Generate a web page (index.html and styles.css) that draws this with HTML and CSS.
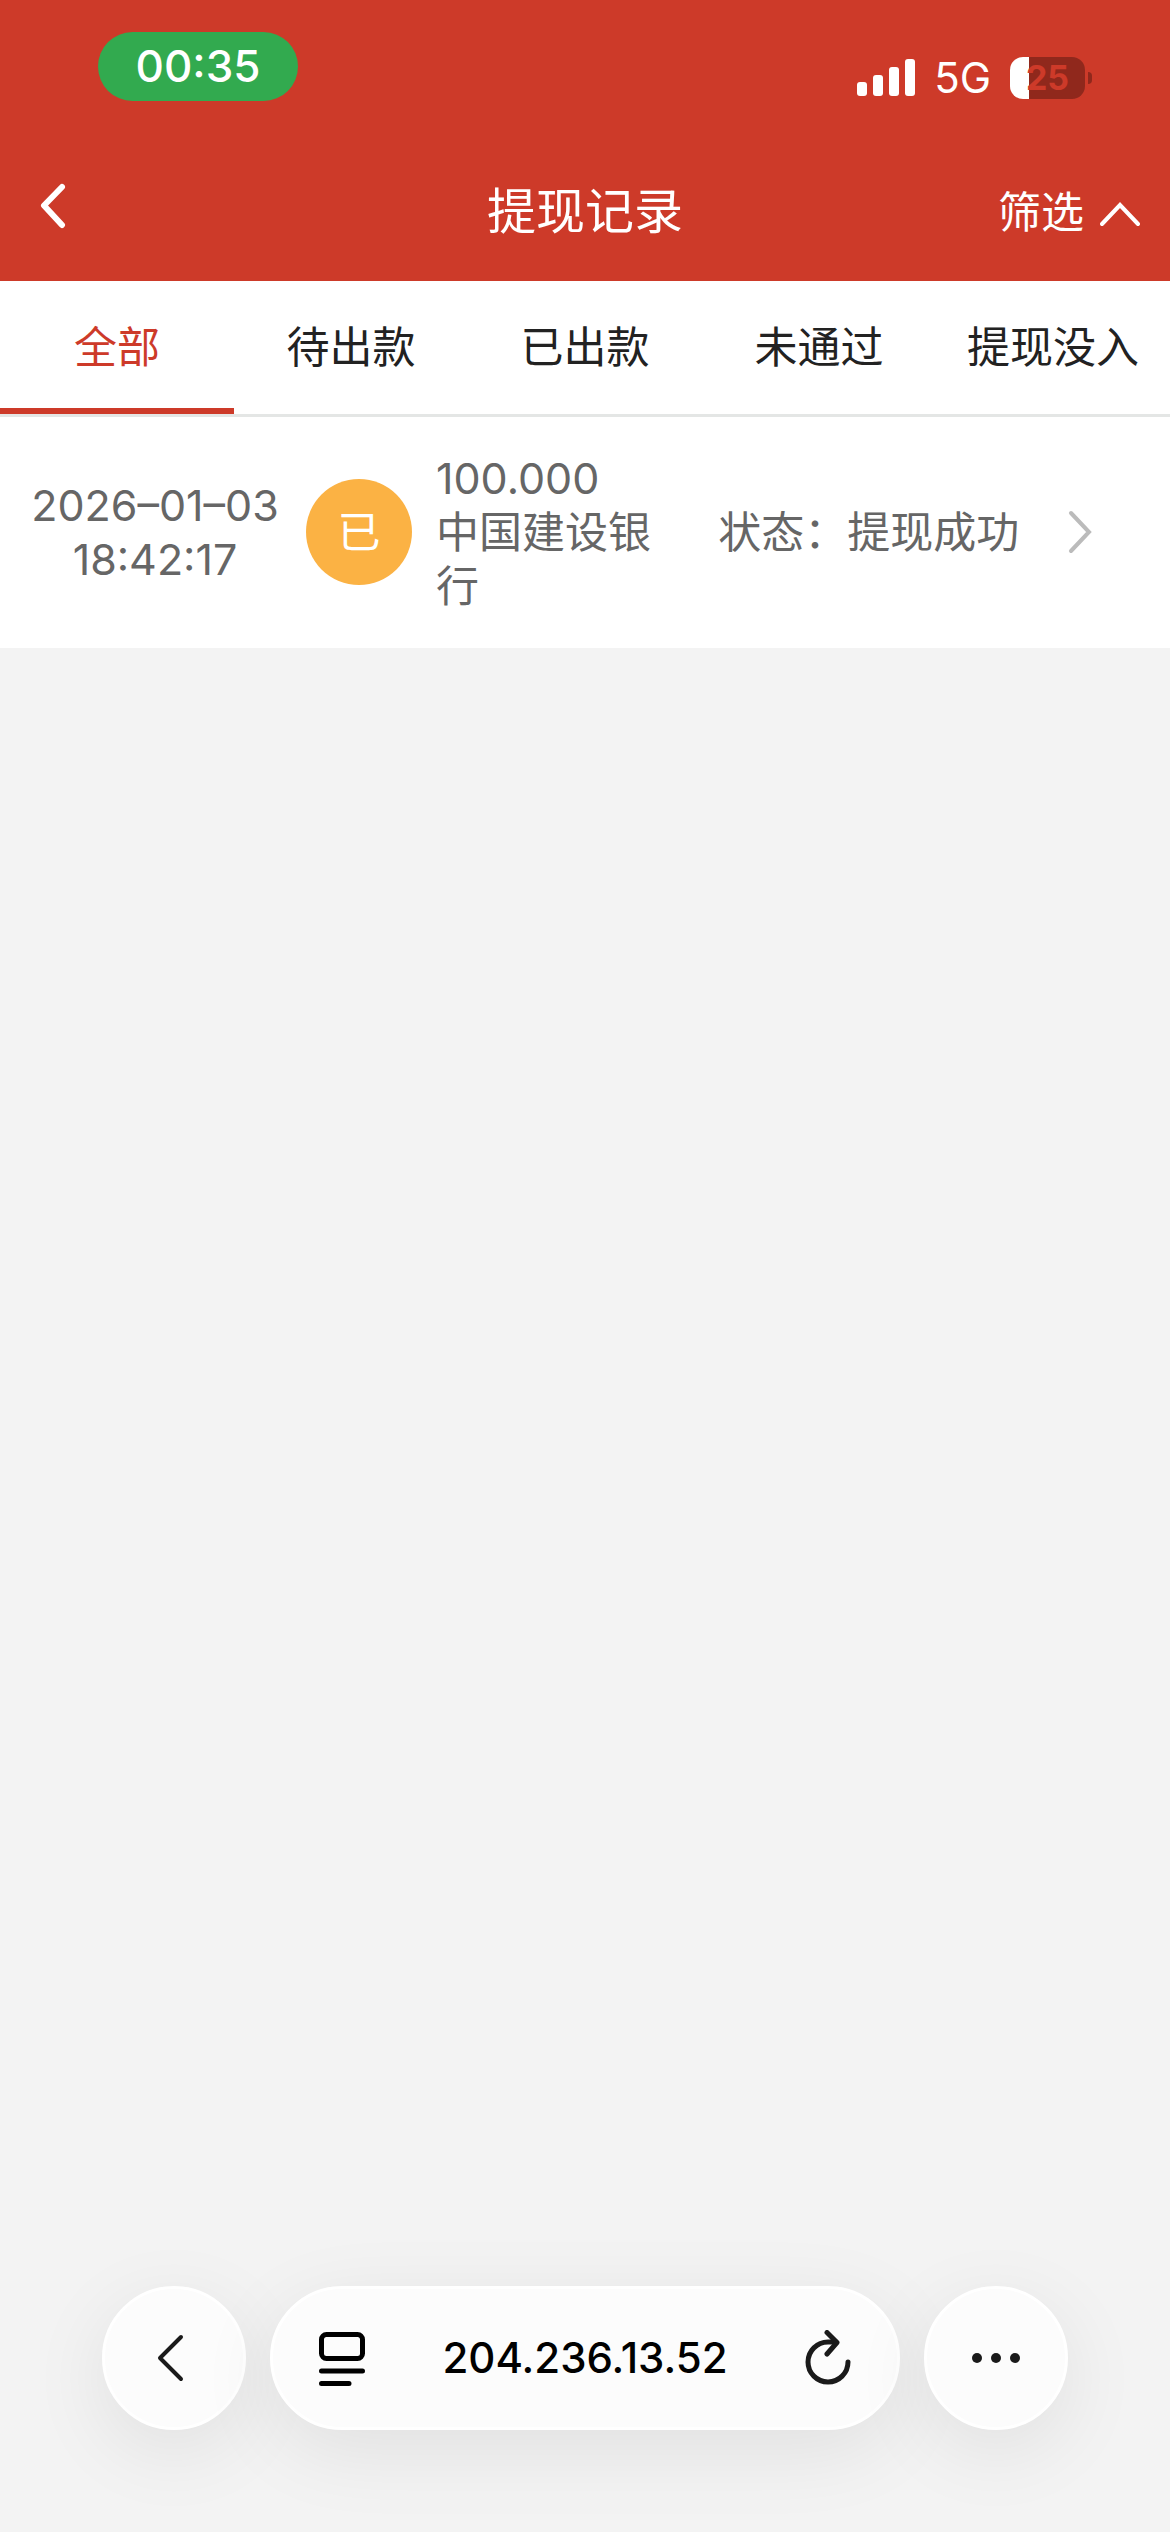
FILE: index.html
```html
<!DOCTYPE html>
<html lang="zh-CN">
<head>
  <title>提现记录</title>
  <meta charset="UTF-8">
  <meta name="viewport" content="width=device-width, initial-scale=1.0">
  <link rel="stylesheet" href="styles.css">
</head>
<body>
  <header class="top">
    <div class="status-bar">
      <span class="clock">00:35</span>
      <div class="status-right">
        <svg class="signal" width="58" height="38" viewBox="0 0 58 38" fill="#fff" aria-hidden="true">
          <rect x="0" y="23" width="10" height="14" rx="3"/>
          <rect x="16" y="16" width="10" height="21" rx="3"/>
          <rect x="32" y="8" width="10" height="29" rx="3"/>
          <rect x="48" y="0" width="10" height="37" rx="3"/>
        </svg>
        <span class="network">5G</span>
        <div class="battery">
          <span class="battery-body">25</span>
          <span class="battery-tip"></span>
        </div>
      </div>
    </div>
    <div class="nav">
      <a class="nav-back" href="#" aria-label="返回">
        <svg width="26" height="46" viewBox="0 0 26 46" fill="none" stroke="#fff" stroke-width="6" stroke-linecap="round" stroke-linejoin="round">
          <path d="M22 4L4 22.500L22 42"/>
        </svg>
      </a>
      <h1 class="nav-title">提现记录</h1>
      <button class="nav-filter" type="button">
        筛选
        <svg width="40" height="34" viewBox="0 0 40 34" fill="none" stroke="#fff" stroke-width="4" stroke-linecap="round" stroke-linejoin="miter">
          <path d="M2 29L20 10L38 29"/>
        </svg>
      </button>
    </div>
  </header>

  <nav class="tabs">
    <a class="tab active" href="#">全部</a>
    <a class="tab" href="#">待出款</a>
    <a class="tab" href="#">已出款</a>
    <a class="tab" href="#">未通过</a>
    <a class="tab" href="#">提现没入</a>
  </nav>

  <main class="list">
    <a class="record" href="#">
      <span class="record-time">2026–01–03<br>18:42:17</span>
      <span class="record-icon">已</span>
      <span class="record-bank">100.000<br>中国建设银行</span>
      <span class="record-state">状态：提现成功</span>
      <svg width="24" height="44" viewBox="0 0 24 44" fill="none" stroke="#bbb" stroke-width="4" stroke-linecap="round">
        <path d="M3 3L21 22L3 41"/>
      </svg>
    </a>
  </main>

  <footer class="browser-bar">
    <button class="round" type="button" aria-label="后退">
      <svg width="34" height="50" viewBox="0 0 34 50" fill="none" stroke="#1a1a1a" stroke-width="4" stroke-linecap="round" stroke-linejoin="round">
        <path d="M24 4L3 25L24 46"/>
      </svg>
    </button>
    <div class="address">
      <button class="plain" type="button" aria-label="页面菜单">
        <svg width="46" height="56" viewBox="0 0 46 56" fill="none" stroke="#000" stroke-width="5" stroke-linecap="round">
          <rect x="2.500" y="4.500" width="41" height="24" rx="5"/>
          <path d="M2.500 41H43.500M2.500 53.500H30"/>
        </svg>
      </button>
      <span class="url">204.236.13.52</span>
      <button class="plain" type="button" aria-label="刷新">
        <svg width="46" height="56" viewBox="0 0 46 56" fill="none" stroke="#1a1a1a" stroke-width="5" stroke-linecap="round" stroke-linejoin="round">
          <path d="M43 32A20 20 0 1 1 23 12H31"/>
          <path d="M22 2.500L32 12.500L22 24"/>
        </svg>
      </button>
    </div>
    <button class="round" type="button" aria-label="更多">
      <svg width="50" height="12" viewBox="0 0 50 12" fill="#1a1a1a">
        <circle cx="6" cy="6" r="5"/>
        <circle cx="25" cy="6" r="5"/>
        <circle cx="44" cy="6" r="5"/>
      </svg>
    </button>
  </footer>
</body>
</html>
```
FILE: styles.css
```css
*{
  box-sizing:border-box;
}
body{
  margin:0;
  min-height:100vh;
  display:flex;
  flex-direction:column;
  background-color:#f3f3f3;
  color:#666;
  font-family:Inter, "Noto Sans CJK SC", sans-serif;
  font-size:43px;
  line-height:54px;
}
a{
  color:inherit;
  text-decoration:none;
}
button{
  border:0;
  padding:0;
  background:none;
  color:inherit;
  font:inherit;
  cursor:pointer;
}
svg{
  display:block;
}

/* header */
.top{
  background-color:#cd3a29;
  color:#fff;
}
.status-bar{
  display:flex;
  justify-content:space-between;
  align-items:flex-start;
  height:140px;
  padding:32px 78px 0 98px;
}
.clock{
  width:200px;
  border-radius:35px;
  background-color:#32aa4f;
  font-size:44px;
  font-weight:500;
  line-height:69px;
  text-align:center;
}
.status-right{
  display:flex;
  align-items:center;
  gap:19px;
  padding-top:19px;
}
.network{
  font-size:42px;
}
.battery{
  display:flex;
  align-items:center;
  gap:3px;
}
.battery-body{
  width:75px;
  border-radius:13px;
  background:linear-gradient(to right, #fff 25%, #90281c 25%);
  color:#cd3a29;
  font-size:34px;
  font-weight:700;
  line-height:42px;
  text-align:center;
}
.battery-tip{
  width:4px;
  height:12px;
  border-radius:0 4px 4px 0;
  background-color:#90281c;
}
.nav{
  display:grid;
  grid-template-columns:1fr auto 1fr;
  align-items:center;
  height:141px;
  padding:2px 30px 0;
}
.nav-back{
  padding:0 10px 12px;
}
.nav-title{
  margin:0;
  font-size:49px;
  font-weight:400;
}
.nav-filter{
  justify-self:end;
  display:flex;
  align-items:center;
  gap:16px;
}

/* tabs */
.tabs{
  display:flex;
  border-bottom:3px solid #e4e6e5;
  background-color:#fff;
  color:#222;
}
.tab{
  flex:1 1 0;
  padding:39px 0 34px;
  border-bottom:6px solid transparent;
  text-align:center;
  white-space:nowrap;
}
.tab.active{
  border-color:#cd3a29;
  color:#cd3a29;
}

/* records */
.record{
  display:grid;
  grid-template-columns:254px 106px 2fr 3fr 24px;
  align-items:center;
  column-gap:24px;
  padding:34px 78px 35px 28px;
  background-color:#fff;
}
.record-time{
  text-align:center;
  white-space:nowrap;
}
.record-icon{
  border-radius:50%;
  background-color:#fbb244;
  color:#fff;
  line-height:106px;
  text-align:center;
}
.record-state{
  text-align:center;
  white-space:nowrap;
}

/* browser toolbar */
.browser-bar{
  display:flex;
  gap:24px;
  margin-top:auto;
  padding:0 102px 102px;
}
.round,
.address{
  display:flex;
  align-items:center;
  height:144px;
  border:3px solid #fff;
  border-radius:72px;
  background-color:#fcfcfc;
  box-shadow:0 20px 80px rgba(0, 0, 0, 0.08);
}
.round{
  justify-content:center;
  width:144px;
}
.address{
  flex:1;
  justify-content:space-between;
  padding:0 46px;
}
.url{
  color:#000;
  font-size:42px;
  font-weight:500;
}
```
